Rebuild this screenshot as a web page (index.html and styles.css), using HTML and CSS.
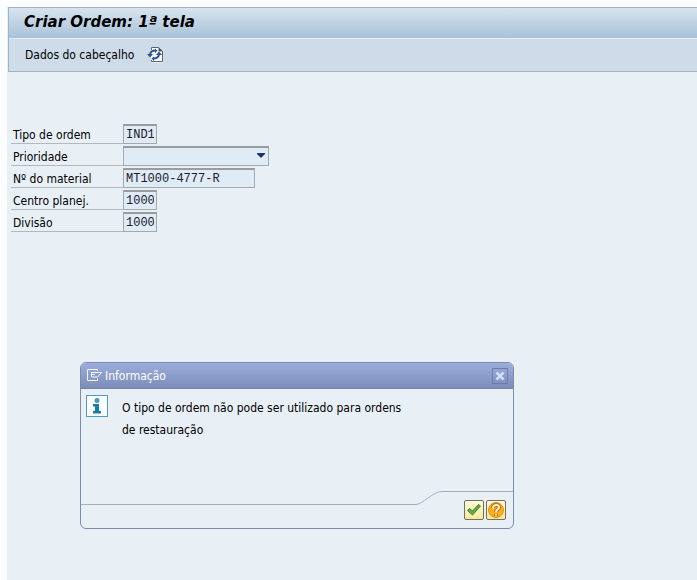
FILE: index.html
```html
<!DOCTYPE html>
<html lang="pt">
<head>
<meta charset="utf-8">
<title>Criar Ordem: 1ª tela</title>
<link rel="stylesheet" href="styles.css">
</head>
<body>
<div class="screen">
  <header class="title-bar"><h1>Criar Ordem: 1ª tela</h1></header>
  <nav class="toolbar">
    <button type="button" class="tool">Dados do cabeçalho</button>
    <button type="button" class="tool" aria-label="Atualizar">
      <svg width="16" height="16" viewBox="0 0 16 16">
        <path d="M4 .5h7.500l4 4v11H4z" fill="#fbfcfe"/>
        <path d="M4.500 3V.5h7l4 4v10h-11V13" fill="none" stroke="#5b6470"/>
        <path d="M11.500 0v4.500H16z" fill="#4b5563"/>
        <path d="M8.500 3.500C5 3.500 3.500 5 3 7.500M6.500 11.500C10 11.500 11.500 10 12 7.500" fill="none" stroke="#2d5596" stroke-width="2"/>
        <path d="M0 7h6l-3 3.500zM9 8h6l-3-3.500zM8 1.500v4.500L10.500 3.800zM7 9.500v4.500L4.500 11.500z" fill="#2d5596"/>
      </svg>
    </button>
  </nav>
  <main>
    <form class="fields">
      <div class="row"><label for="type">Tipo de ordem</label><input id="type" class="short" value="IND1"></div>
      <div class="row"><label for="priority">Prioridade</label>
        <div class="picker">
          <select id="priority"><option></option></select>
          <svg class="arrow" width="10" height="6" viewBox="0 0 10 6"><path d="M1 0h8v1L5 5 1 1z" fill="#1d3566"/></svg>
        </div>
      </div>
      <div class="row"><label for="material">Nº do material</label><input id="material" class="long" value="MT1000-4777-R"></div>
      <div class="row"><label for="plant">Centro planej.</label><input id="plant" class="short" value="1000"></div>
      <div class="row"><label for="division">Divisão</label><input id="division" class="short" value="1000"></div>
    </form>
  </main>
  <section class="popup" role="dialog" aria-labelledby="popup-title">
    <header class="popup-head">
      <svg width="15" height="13" viewBox="0 0 15 13" fill="none" stroke="#f4f7ff">
        <path d="M10.500 2V.5H.5v11h10V9.500M4 3.500h10.500L10.500 8H5M4 5.500h4M4.500 3.500V8"/>
      </svg>
      <h2 id="popup-title">Informação</h2>
      <button type="button" class="close" aria-label="Fechar">
        <svg width="10" height="10" viewBox="0 0 10 10"><path d="M1.500 1.500l7 7M8.500 1.500l-7 7" stroke="#d3defa" stroke-width="2.500"/></svg>
      </button>
    </header>
    <div class="message">
      <svg width="22" height="22" viewBox="0 0 22 22">
        <rect x=".5" y=".5" width="21" height="21" fill="#fcfeff" stroke="#4d9bc0"/>
        <circle cx="11" cy="5.500" r="2.500" fill="#4b98bd"/>
        <path d="M7 9h6v7h2v2.500H7V16h2v-4.500H7z" fill="#177eac"/>
      </svg>
      <p>O tipo de ordem não pode ser utilizado para ordens<br>de restauração</p>
    </div>
    <footer class="popup-foot">
      <div class="edge">
        <span class="edge-low"></span>
        <svg width="34" height="14" viewBox="0 0 34 14"><path d="M0 13.500h3C9 13.500 20 .5 29 .5h5" fill="none" stroke="#a4b0bb"/></svg>
        <span class="edge-high"></span>
      </div>
      <div class="actions">
        <button type="button" aria-label="Continuar">
          <svg width="16" height="16" viewBox="0 0 16 16"><path d="M1.500 8.500L3.500 6.500 6.500 9 12.500 2.500l2 1.500L6.500 13z" fill="#69ad45" stroke="#39812d"/></svg>
        </button>
        <button type="button" aria-label="Ajuda">
          <svg width="18" height="18" viewBox="0 0 18 18">
            <circle cx="9" cy="9" r="7.500" fill="#fbb01c" stroke="#e88d0c"/>
            <path d="M6 7C5.500 3 12.500 3 12 6.500c-.2 1.700-3 2-3 4.500M9 12.500V15" fill="none" stroke="#c96d13" stroke-width="4"/>
            <path d="M6 7.500C5.500 3 12.500 3 12 6.500c-.2 1.700-3 2-3 4.500M9 12.500v2" fill="none" stroke="#fff7d8" stroke-width="2"/>
          </svg>
        </button>
      </div>
    </footer>
  </section>
</div>
</body>
</html>
```
FILE: styles.css
```css
* { box-sizing: border-box; }

body {
  margin: 0;
  padding: 7px 0 0 7px;
  background: #fcfdfe;
  color: #000;
  font: 12px/22px "DejaVu Sans Condensed", "DejaVu Sans", sans-serif;
  font-stretch: condensed;
}

h1, h2, p { margin: 0; }
svg { display: block; }

button {
  padding: 0;
  border: 0;
  background: none;
  color: inherit;
  font: inherit;
}

.screen {
  position: relative;
  min-height: calc(100vh - 7px);
  background: #e8f0f6;
}

.title-bar {
  height: 31px;
  margin-left: 1px;
  padding-left: 15px;
  border: solid #9fb3c4;
  border-width: 1px 0 0 1px;
  background: linear-gradient(#d7e4ef, #a9c2d8);
}

.title-bar h1 {
  font: italic bold 15px/28px "DejaVu Sans", sans-serif;
}

.toolbar {
  display: flex;
  align-items: center;
  gap: 13px;
  height: 34px;
  margin-left: 1px;
  padding-left: 16px;
  border: solid #a0b3c3;
  border-width: 0 0 1px 1px;
  background: #cddce8;
  box-shadow: inset 0 1px #e5eef5;
}

.fields {
  display: grid;
  gap: 2px;
  padding: 52px 0 0 4px;
}

.row { display: flex; height: 20px; }

.row label {
  width: 112px;
  padding-left: 2px;
  border-bottom: 1px solid #b2b8bd;
  line-height: 22px;
}

.row input, .row select {
  display: block;
  height: 20px;
  margin: 0;
  padding: 0 2px;
  border: 1px solid #a5a9ad;
  border-top: 2px solid #999da1;
  border-radius: 0;
  background: #dfebf5;
  color: #1a2030;
  font: 12px "Liberation Mono", monospace;
  outline: 0;
}

.row .short { width: 34px; }
.row .long { width: 132px; }

.picker { position: relative; width: 146px; }
.row select { width: 100%; appearance: none; }

.arrow {
  position: absolute;
  top: 7px;
  right: 3px;
  pointer-events: none;
}

.popup {
  position: absolute;
  top: 355px;
  left: 73px;
  width: 434px;
  border: 1px solid #7c8bab;
  border-radius: 6px;
  background: #e8f0f6;
  overflow: hidden;
}

.popup-head {
  display: flex;
  align-items: center;
  gap: 3px;
  height: 26px;
  padding: 0 5px 0 6px;
  border-bottom: 1px solid #7484ae;
  background: linear-gradient(#9cadde, #7d8db8);
  color: #fff;
}

.popup-head h2 {
  flex: 1;
  font-size: 12px;
  font-weight: normal;
}

.close {
  display: grid;
  place-items: center;
  width: 16px;
  height: 16px;
  border: 1px solid #6c7dac;
}

.message {
  display: flex;
  gap: 14px;
  height: 102px;
  padding: 6px 5px;
}

.message p { padding-top: 2px; }

.edge { display: flex; height: 14px; }
.edge-low { width: 332px; border-bottom: 1px solid #a4b0bb; }
.edge-high { flex: 1; border-top: 1px solid #a4b0bb; }

.actions {
  display: flex;
  justify-content: flex-end;
  gap: 2px;
  margin-top: -5px;
  padding: 0 7px 8px;
}

.actions button {
  display: grid;
  place-items: center;
  width: 20px;
  height: 20px;
  border: 1px solid #756f5d;
  border-radius: 2px;
  background: linear-gradient(#fffbdc, #f8e89d);
}
```
